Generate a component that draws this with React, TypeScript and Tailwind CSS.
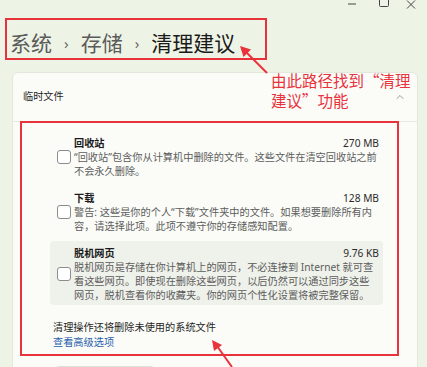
import { ChevronUp } from "lucide-react";

type CleanItem = {
  title: string;
  size: string;
  lines: string[];
  active?: boolean;
};

const ITEMS: CleanItem[] = [
  {
    title: "回收站",
    size: "270 MB",
    lines: [
      "“回收站”包含你从计算机中删除的文件。这些文件在清空回收站之前",
      "不会永久删除。",
    ],
  },
  {
    title: "下载",
    size: "128 MB",
    lines: [
      "警告: 这些是你的个人“下载”文件夹中的文件。如果想要删除所有内",
      "容，请选择此项。此项不遵守你的存储感知配置。",
    ],
  },
  {
    title: "脱机网页",
    size: "9.76 KB",
    active: true,
    lines: [
      "脱机网页是存储在你计算机上的网页，不必连接到 Internet 就可查",
      "看这些网页。即使现在删除这些网页，以后仍然可以通过同步这些",
      "网页，脱机查看你的收藏夹。你的网页个性化设置将被完整保留。",
    ],
  },
];

function Item({ item }: { item: CleanItem }) {
  return (
    <div
      className={`flex items-center gap-[3px] rounded-[4px] pl-[7px] pr-[4px] pt-[5px] pb-[3px] ${
        item.active ? "bg-[#eff1eb]" : ""
      }`}
    >
      {/* checkbox */}
      <div className="h-[14px] w-[14px] shrink-0 rounded-[3px] border border-[#8c8c8c] bg-white" />
      <div className="flex-1 text-[10.2px] leading-[14px]">
        <div className="flex justify-between">
          <span className="font-bold text-[#1b1b1b]">{item.title}</span>
          <span className="text-[#2b2b2b]">{item.size}</span>
        </div>
        {item.lines.map((l) => (
          <div key={l} className="whitespace-nowrap text-[#5c5c5c]">
            {l}
          </div>
        ))}
      </div>
    </div>
  );
}

export default function App() {
  return (
    <div className="relative h-[367px] w-[427px] overflow-hidden bg-[#eef4e5] font-['Noto_Sans','Noto_Sans_CJK_SC',sans-serif]">
      {/* title bar buttons */}
      <div className="flex h-[18px] items-start justify-end pr-[5px]">
        <div className="flex w-[32px] justify-center">
          <svg width="10" height="8" viewBox="0 0 10 8">
            <path d="M1 4h8" stroke="#444" strokeWidth="1" />
          </svg>
        </div>
        <div className="flex w-[32px] justify-center">
          <svg width="12" height="8" viewBox="0 0 12 8">
            <path d="M1.5 -2v7.5a1 1 0 0 0 1 1h7a1 1 0 0 0 1-1v-7.5" fill="none" stroke="#444" strokeWidth="1" />
          </svg>
        </div>
        <div className="flex w-[22px] justify-center">
          <svg width="10" height="10" viewBox="0 0 10 10">
            <path d="M1 0.5l8 8M9 0.5l-8 8" stroke="#444" strokeWidth="1" />
          </svg>
        </div>
      </div>

      {/* breadcrumb */}
      <div className="ml-[5px] flex h-[42px] w-[262px] items-center border-2 border-[#e8323c] pl-[3px] pt-[8px] text-[21px] leading-none">
        <span className="text-[#5b5b5b]">系统</span>
        <span className="mx-[12px] text-[15px] text-[#6a6a6a]">›</span>
        <span className="text-[#5b5b5b]">存储</span>
        <span className="mx-[12px] text-[15px] text-[#6a6a6a]">›</span>
        <span className="text-[#1a1a1a]">清理建议</span>
      </div>

      {/* card */}
      <div className="ml-[12px] mt-[12px] w-[406px] rounded-t-[6px] border border-[#e3e8dc] bg-[#fbfcf8]">
        <div className="flex h-[49px] items-center justify-between border-b border-[#e6e9e1] pl-[10px] pr-[11px]">
          <span className="text-[10.2px] text-[#1f1f1f]">临时文件</span>
          <ChevronUp size={12} strokeWidth={1.3} className="text-[#666]" />
        </div>

        <div className="-mt-px ml-[7px] w-[379px] border-2 border-[#e8323c] pb-[4px] pt-[8px]">
          <div className="ml-[28px] mr-[14px] flex flex-col gap-[5px]">
            {ITEMS.map((it) => (
              <Item key={it.title} item={it} />
            ))}
          </div>
          <div className="ml-[31px] mt-[15px] text-[10.2px] leading-[15px]">
            <div className="text-[#1f1f1f]">清理操作还将删除未使用的系统文件</div>
            <div className="text-[#2a60ac]">查看高级选项</div>
          </div>
        </div>

        <div className="ml-[42px] mt-[10px] h-[30px] w-[100px] rounded-[4px] border border-[#dcdfd6] bg-white" />
      </div>

      {/* annotation */}
      <div className="absolute left-[271px] top-[70px] font-['Noto_Sans_CJK_SC',sans-serif] text-[15.5px] leading-[20px] text-[#e8323c]">
        <div>由此路径找到“清理</div>
        <div>建议”功能</div>
      </div>

      {/* arrows */}
      <svg className="pointer-events-none absolute left-0 top-0" width="427" height="367">
        <g stroke="#e8323c" strokeWidth="2" fill="#e8323c">
          <line x1="267" y1="73" x2="246" y2="52" />
          <path d="M240 46l11 3.5l-7.5 7.5z" stroke="none" />
          <line x1="232" y1="367" x2="217" y2="346" />
          <path d="M212 340l10 5l-8 6z" stroke="none" />
        </g>
      </svg>
    </div>
  );
}
